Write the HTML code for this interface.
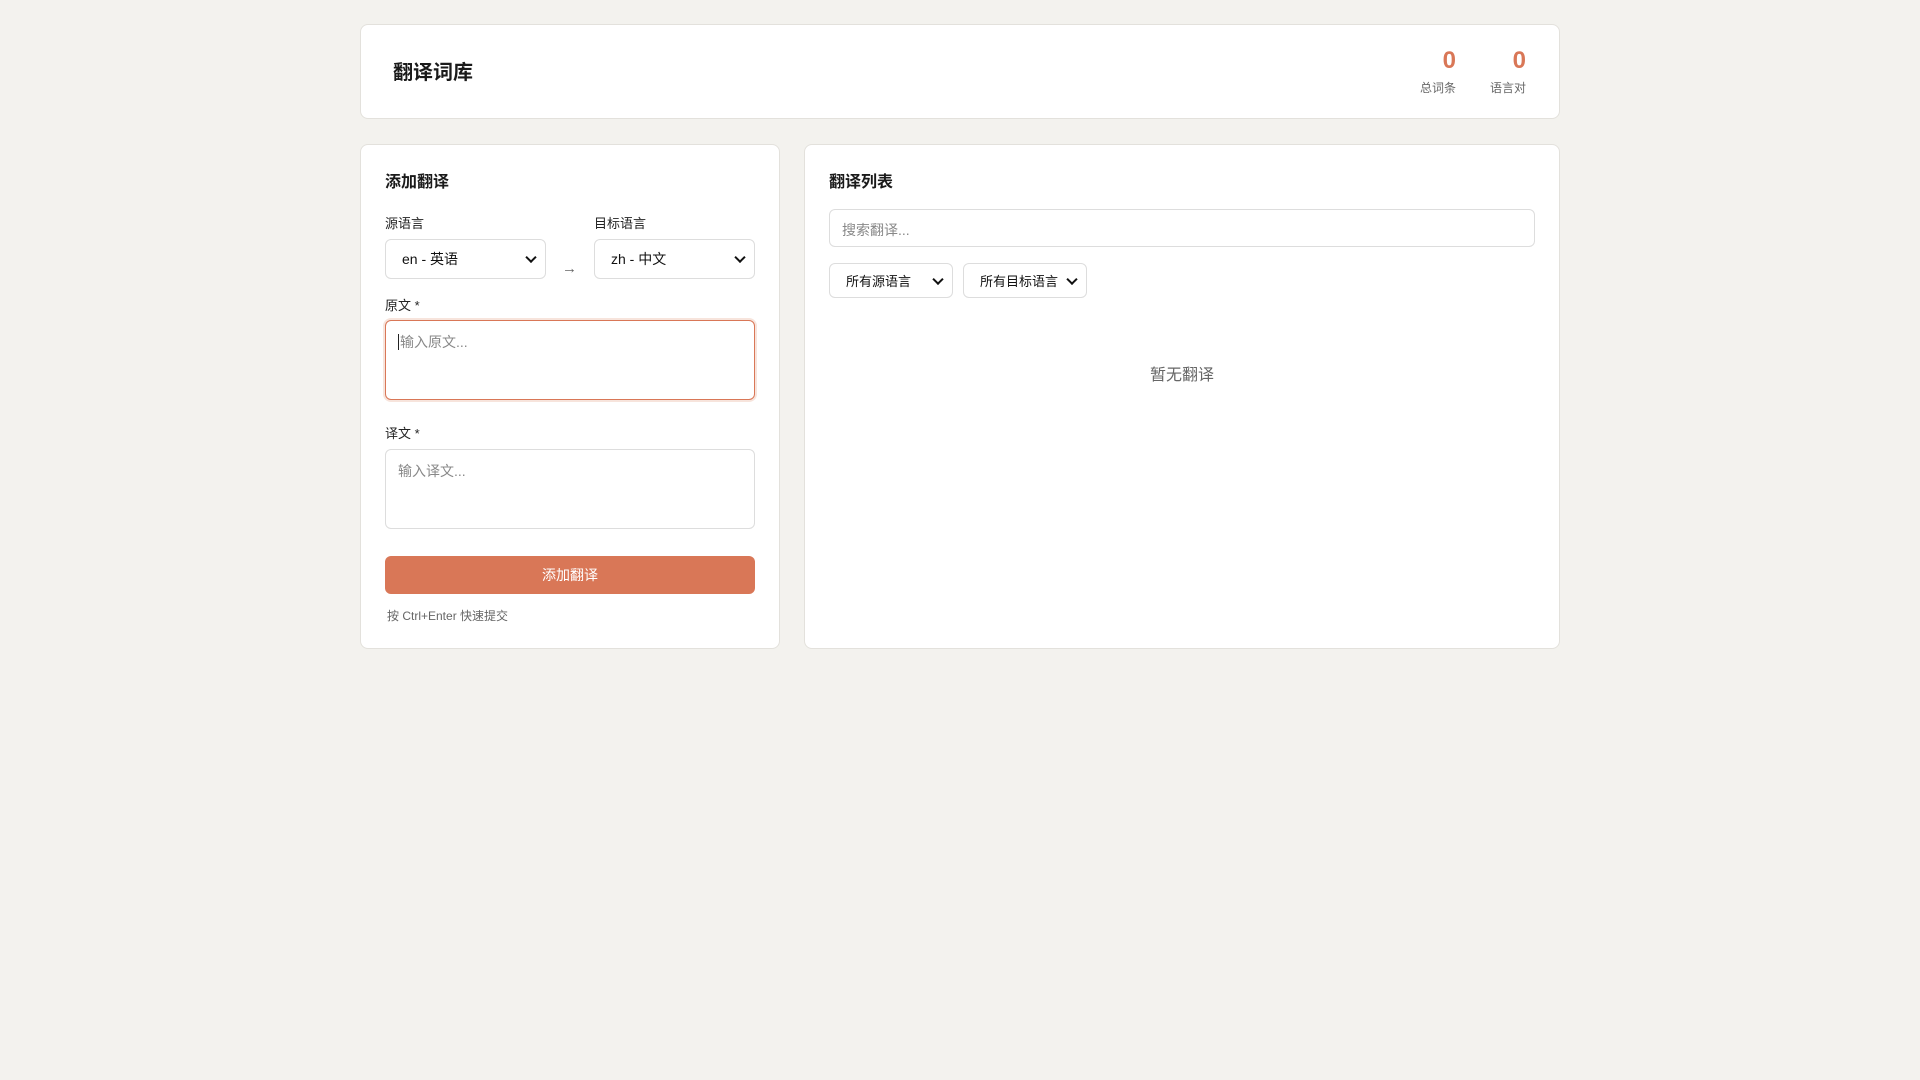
<!DOCTYPE html>
<html><head><meta charset="utf-8"><style>
*{box-sizing:border-box;margin:0;padding:0}
body{width:1920px;height:1080px;background:#f3f2ee;font-family:"Liberation Sans","Noto Sans CJK SC",sans-serif;color:#1a1a1a;position:relative}
.card{position:absolute;background:#fff;border:1px solid #e3e1dc;border-radius:8px}
.a{position:absolute}
.sel{position:absolute;border:1px solid #ddd;border-radius:6px;background:#fff;font-size:14px;color:#111;padding-left:16px;display:flex;align-items:center}
.sel::after{content:"";position:absolute;right:10px;top:50%;width:6px;height:6px;border-right:2px solid #111;border-bottom:2px solid #111;transform:translateY(-70%) rotate(45deg)}
.ta{position:absolute;border:1px solid #ddd;border-radius:6px;background:#fff;font-size:14px;color:#888;padding:11px 12px}
.lbl{position:absolute;font-size:13px;color:#222}
.st{position:absolute;top:47px;text-align:right}
.st b{display:block;font-size:24px;color:#d97757;line-height:28px}
.st span{display:block;font-size:12px;color:#666;margin-top:4px}
</style></head><body>
<div class="card" style="left:360px;top:24px;width:1200px;height:95px"></div>
<div class="a" style="left:393px;top:56px;font-size:20px;font-weight:bold">翻译词库</div>
<div class="st" style="right:464px"><b>0</b><span>总词条</span></div>
<div class="st" style="right:394px"><b>0</b><span>语言对</span></div>

<div class="card" style="left:360px;top:144px;width:420px;height:505px"></div>
<div class="a" style="left:385px;top:168px;font-size:16px;font-weight:bold">添加翻译</div>
<div class="lbl" style="left:385px;top:213px">源语言</div>
<div class="lbl" style="left:594px;top:213px">目标语言</div>
<div class="sel" style="left:385px;top:239px;width:161px;height:40px">en - 英语</div>
<div class="a" style="left:562px;top:260px;font-size:15px;color:#666">→</div>
<div class="sel" style="left:594px;top:239px;width:161px;height:40px">zh - 中文</div>
<div class="lbl" style="left:385px;top:295px">原文 *</div>
<div class="ta" style="left:385px;top:320px;width:370px;height:80px;border:1.5px solid #d97757;box-shadow:0 0 0 2px #f7e4dc"><span style="border-left:1px solid #222;padding-left:1px">输入原文...</span></div>
<div class="lbl" style="left:385px;top:423px">译文 *</div>
<div class="ta" style="left:385px;top:449px;width:370px;height:80px">输入译文...</div>
<div class="a" style="left:385px;top:556px;width:370px;height:38px;background:#d97757;border-radius:6px;color:#fff;font-size:14px;display:flex;align-items:center;justify-content:center">添加翻译</div>
<div class="a" style="left:387px;top:607px;font-size:12px;color:#666">按 Ctrl+Enter 快速提交</div>

<div class="card" style="left:804px;top:144px;width:756px;height:505px"></div>
<div class="a" style="left:829px;top:168px;font-size:16px;font-weight:bold">翻译列表</div>
<div class="ta" style="left:829px;top:209px;width:706px;height:38px;padding:10px 12px">搜索翻译...</div>
<div class="sel" style="left:829px;top:263px;width:124px;height:35px;font-size:13px">所有源语言</div>
<div class="sel" style="left:963px;top:263px;width:124px;height:35px;font-size:13px">所有目标语言</div>
<div class="a" style="left:829px;top:361px;width:706px;text-align:center;font-size:16px;color:#666">暂无翻译</div>
</body></html>
